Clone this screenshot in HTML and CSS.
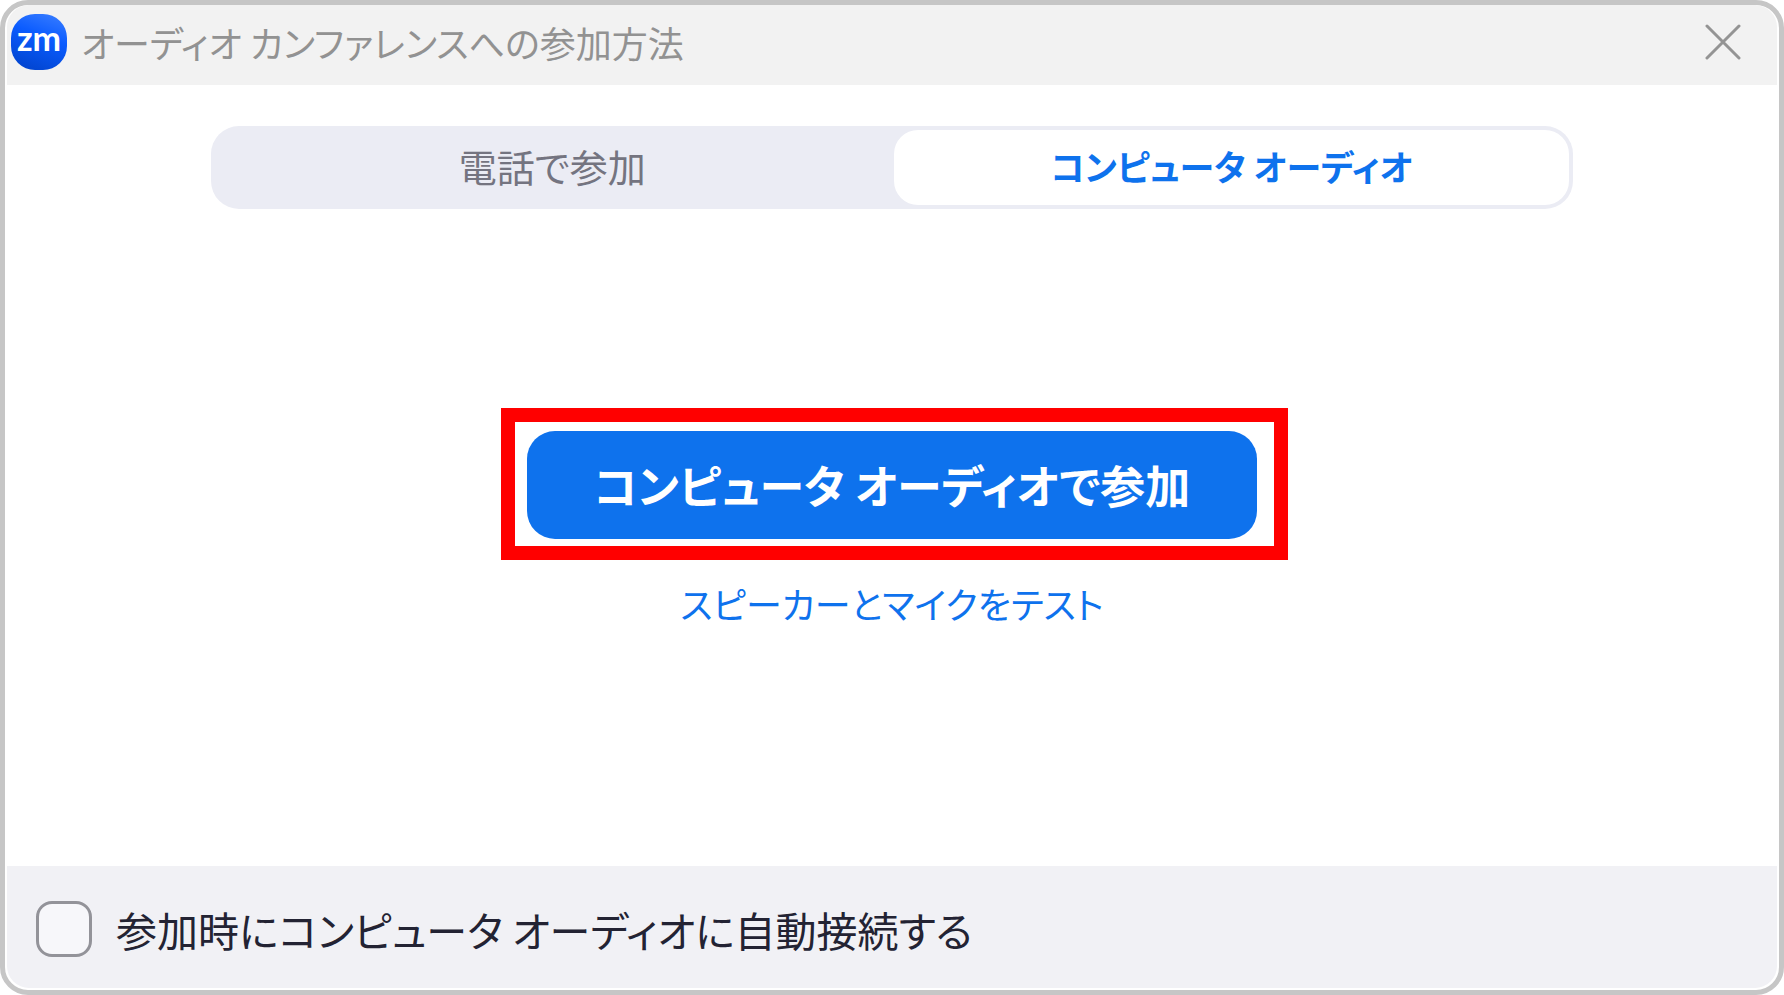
FILE: index.html
```html
<!DOCTYPE html>
<html lang="ja">
<head>
    <meta charset="UTF-8">
    <meta name="viewport" content="width=device-width, initial-scale=1.0">
    <title>オーディオ カンファレンスへの参加方法</title>
    <link rel="stylesheet" href="styles.css">
</head>
<body>
    <div class="dialog">
        <header class="titlebar">
            <span class="logo">zm</span>
            <h1>オーディオ カンファレンスへの参加方法</h1>
            <button class="close" type="button" aria-label="閉じる">
                <svg width="36" height="36" viewBox="0 0 36 36" fill="none" stroke="#949494" stroke-width="3" stroke-linecap="round">
                    <path d="M2 2L34 34M34 2L2 34"/>
                </svg>
            </button>
        </header>
        <main>
            <div class="tabs" role="tablist">
                <button class="tab" type="button" role="tab" aria-selected="false">電話で参加</button>
                <button class="tab active" type="button" role="tab" aria-selected="true">コンピュータ オーディオ</button>
            </div>
            <div class="join">
                <button class="join-button" type="button">コンピュータ オーディオで参加</button>
                <span class="highlight"></span>
            </div>
            <a class="test-link" href="#">スピーカーとマイクをテスト</a>
        </main>
        <footer>
            <input type="checkbox" id="auto-connect">
            <label for="auto-connect">参加時にコンピュータ オーディオに自動接続する</label>
        </footer>
    </div>
</body>
</html>
```

FILE: styles.css
```css
* {
    box-sizing: border-box;
}
body {
    margin: 0;
    background: white;
    font-family: "Noto Sans CJK JP", sans-serif;
    font-feature-settings: "palt";
}
button {
    border: none;
    padding: 0;
    font-family: inherit;
    font-feature-settings: inherit;
    cursor: pointer;
}
.dialog {
    display: flex;
    flex-direction: column;
    min-height: 100vh;
    padding: 0 2px 2px;
    border: 5px solid #c6c6c6;
    border-radius: 28px;
    overflow: hidden;
}
.titlebar {
    display: flex;
    align-items: center;
    height: 80px;
    padding: 0 36px 6px 4px;
    background: #f2f2f2;
    border-radius: 22px 22px 0 0;
}
.logo {
    width: 56px;
    height: 56px;
    border-radius: 24px;
    background: linear-gradient(20deg, #0041c8, #0b5cff 60%, #3d80ff);
    color: white;
    font-family: Lato, sans-serif;
    font-size: 34px;
    font-weight: bold;
    line-height: 48px;
    text-align: center;
}
h1 {
    flex: 1;
    margin: 0 0 0 14px;
    color: #929292;
    font-size: 36px;
    font-weight: normal;
    line-height: 56px;
}
.close {
    display: flex;
    background: none;
}
main {
    flex: 1;
    display: flex;
    flex-direction: column;
    align-items: center;
    padding-top: 41px;
}
.tabs {
    display: flex;
    gap: 4px;
    width: 77%;
    height: 83px;
    padding: 4px;
    border-radius: 28px;
    background: #ebecf4;
}
.tab {
    flex: 1;
    padding-bottom: 4px;
    border-radius: 24px;
    background: none;
    color: #747480;
    font-size: 38px;
    line-height: 56px;
}
.tab.active {
    background: white;
    color: #0e72ed;
    font-size: 35px;
    font-weight: bold;
}
.join {
    position: relative;
    margin-top: 222px;
}
.join-button {
    width: 730px;
    height: 108px;
    padding-bottom: 2px;
    border-radius: 28px;
    background: #0e72ed;
    color: white;
    font-size: 45px;
    font-weight: bold;
}
/* red frame around the join button */
.highlight {
    position: absolute;
    top: -23px;
    right: -31px;
    bottom: -21px;
    left: -26px;
    border: 14px solid #ff0000;
    pointer-events: none;
}
.test-link {
    margin-top: 36px;
    color: #0e72ed;
    font-size: 36px;
    line-height: 56px;
    text-decoration: none;
}
footer {
    display: flex;
    align-items: center;
    gap: 24px;
    height: 122px;
    padding: 4px 29px 0;
    border-radius: 0 0 22px 22px;
    background: #f1f1f5;
}
footer input {
    appearance: none;
    width: 56px;
    height: 56px;
    margin: 0;
    border: 3px solid #939399;
    border-radius: 16px;
    background: #f7f7fa;
}
footer label {
    color: #232333;
    font-size: 41px;
    line-height: 56px;
}
```
